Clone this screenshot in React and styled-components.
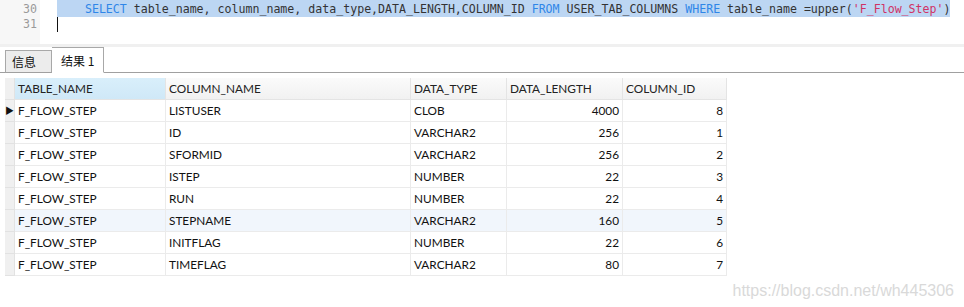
import styled, { createGlobalStyle } from "styled-components";

const GlobalStyle = createGlobalStyle`
  html, body {
    margin: 0;
    padding: 0;
    background: #ffffff;
    width: 964px;
    height: 307px;
    overflow: hidden;
  }
`;

const Page = styled.div`
  width: 964px;
  height: 307px;
  display: flex;
  flex-direction: column;
  background: #ffffff;
  font-family: "Lato", "Liberation Sans", "Noto Sans CJK SC", sans-serif;
`;

/* ---- editor ---- */
const Editor = styled.div`
  height: 44px;
  display: flex;
  overflow: hidden;
`;

const Gutter = styled.div`
  width: 40px;
  padding-top: 2px;
  background: #f7f7f7;
  display: flex;
  flex-direction: column;
`;

const LineNo = styled.div`
  height: 15px;
  line-height: 15px;
  padding-right: 3px;
  text-align: right;
  font-family: "DejaVu Sans Mono", monospace;
  font-size: 11.6px;
  color: #9a9a9a;
`;

const Code = styled.div`
  flex: 1;
  padding-left: 17px;
  display: flex;
  flex-direction: column;
`;

const PrevSel = styled.div`
  height: 2px;
  width: 893px;
  background: #bcd6f3;
`;

const Line = styled.div`
  height: 15px;
  line-height: 15px;
  display: flex;
  font-family: "DejaVu Sans Mono", monospace;
  font-size: 11.6px;
  white-space: pre;
  color: #333;
`;

const Sel = styled.span`
  background: #bcd6f3;
`;

const Kw = styled.span`
  color: #2f86e8;
`;

const Str = styled.span`
  color: #d03266;
`;

const Caret = styled.span`
  width: 1px;
  height: 15px;
  background: #111;
`;

const Band = styled.div`
  height: 3px;
  background: #f0f0f0;
`;

/* ---- tabs ---- */
const TabBar = styled.div`
  height: 25px;
  display: flex;
  align-items: flex-end;
  padding-left: 5px;
  border-bottom: 1px solid #a0a0a0;
`;

const Tab = styled.div`
  height: ${(p) => (p.$active ? "26px" : "23px")};
  width: ${(p) => p.$w}px;
  margin-bottom: -1px;
  padding-left: ${(p) => (p.$active ? "9px" : "6px")};
  display: flex;
  align-items: center;
  box-sizing: border-box;
  white-space: nowrap;
  border: 1px solid #a8a8a8;
  border-bottom: 1px solid ${(p) => (p.$active ? "#ffffff" : "#a0a0a0")};
  border-left: ${(p) => (p.$active ? "none" : "1px solid #a8a8a8")};
  background: ${(p) => (p.$active ? "#ffffff" : "#ececec")};
  font-family: "Noto Sans CJK SC", sans-serif;
  font-size: 12px;
  color: #111;
`;

/* ---- grid ---- */
const GridWrap = styled.div`
  padding: 5px 0 0 5px;
`;

const Grid = styled.div`
  display: grid;
  grid-template-columns: 10px 151px 245px 96px 116px 104px;
  width: 722px;
  font-size: 11.8px;
`;

const Indicator = styled.div`
  height: 22px;
  box-sizing: border-box;
  background: #f0f0f0;
  border-bottom: 1px solid #e2e2e2;
  border-right: 1px solid #e2e2e2;
  display: flex;
  align-items: center;
  justify-content: center;
  font-size: 9px;
  color: #111;
`;

const Head = styled.div`
  height: 22px;
  box-sizing: border-box;
  padding-left: 3px;
  display: flex;
  align-items: center;
  border-right: 1px solid #e4e4e4;
  border-bottom: 1px solid #e4e4e4;
  background: ${(p) =>
    p.$sel
      ? "linear-gradient(#d9effb, #cfe8f7)"
      : "linear-gradient(#fbfbfb, #f1f1f1)"};
  color: #222;
`;

const Cell = styled.div`
  height: 22px;
  box-sizing: border-box;
  padding: 0 3px;
  display: flex;
  align-items: center;
  justify-content: ${(p) => (p.$num ? "flex-end" : "flex-start")};
  border-right: 1px solid #ebebeb;
  border-bottom: 1px solid #ebebeb;
  background: ${(p) => (p.$tint ? "#f1f6fc" : "#ffffff")};
  color: #111;
`;

const Watermark = styled.div`
  display: flex;
  justify-content: flex-end;
  padding: 6px 10px 0 0;
  font-family: "Liberation Sans", Arial, sans-serif;
  font-size: 16px;
  color: #d9d9d9;
`;

const headers = ["TABLE_NAME", "COLUMN_NAME", "DATA_TYPE", "DATA_LENGTH", "COLUMN_ID"];

const rows = [
  ["LISTUSER", "CLOB", 4000, 8],
  ["ID", "VARCHAR2", 256, 1],
  ["SFORMID", "VARCHAR2", 256, 2],
  ["ISTEP", "NUMBER", 22, 3],
  ["RUN", "NUMBER", 22, 4],
  ["STEPNAME", "VARCHAR2", 160, 5],
  ["INITFLAG", "NUMBER", 22, 6],
  ["TIMEFLAG", "VARCHAR2", 80, 7],
];

const App = () => {
  return (
    <Page>
      <GlobalStyle />
      <Editor>
        <Gutter>
          <LineNo>30</LineNo>
          <LineNo>31</LineNo>
        </Gutter>
        <Code>
          <PrevSel />
          <Line>
            <Sel>
              {"    "}<Kw>SELECT</Kw>{" table_name, column_name, data_type,DATA_LENGTH,COLUMN_ID "}
              <Kw>FROM</Kw>{" USER_TAB_COLUMNS "}<Kw>WHERE</Kw>{" table_name =upper("}
              <Str>'F_Flow_Step'</Str>{")"}
            </Sel>
          </Line>
          <Line>
            <Caret />
          </Line>
        </Code>
      </Editor>
      <Band />
      <TabBar>
        <Tab $w={47}>信息</Tab>
        <Tab $active $w={52}>结果 1</Tab>
      </TabBar>
      <GridWrap>
        <Grid>
          <Indicator />
          {headers.map((h, i) => (
            <Head key={h} $sel={i === 0}>{h}</Head>
          ))}
          {rows.map((r, i) => (
            <>
              <Indicator key={"i" + i}>{i === 0 ? "▶" : ""}</Indicator>
              <Cell key={"a" + i} $tint={i === 5}>F_FLOW_STEP</Cell>
              <Cell key={"b" + i} $tint={i === 5}>{r[0]}</Cell>
              <Cell key={"c" + i} $tint={i === 5}>{r[1]}</Cell>
              <Cell key={"d" + i} $tint={i === 5} $num>{r[2]}</Cell>
              <Cell key={"e" + i} $tint={i === 5} $num>{r[3]}</Cell>
            </>
          ))}
        </Grid>
      </GridWrap>
      <Watermark>https://blog.csdn.net/wh445306</Watermark>
    </Page>
  );
};

export default App;
